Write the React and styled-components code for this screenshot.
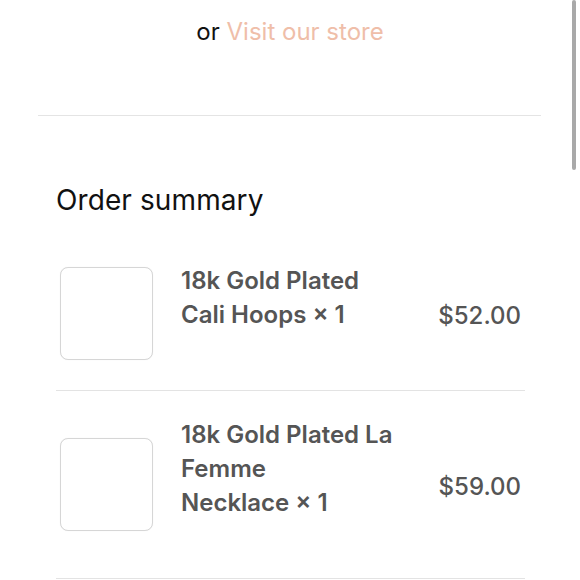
import React from "react";
import styled, { createGlobalStyle } from "styled-components";

const GlobalStyle = createGlobalStyle`
  body {
    margin: 0;
    background: #ffffff;
    font-family: Inter, "Noto Sans", "Liberation Sans", sans-serif;
  }
`;

const Page = styled.div`
  width: 580px;
  height: 580px;
  overflow: hidden;
  position: relative;
  background: #ffffff;
`;

// 상단 - 스토어 링크
const StoreLine = styled.div`
  padding-top: 17px;
  text-align: center;
  font-size: 24px;
  line-height: 30px;
  color: #111111;
`;

const StoreLink = styled.a`
  color: #efbea9;
  text-decoration: none;
`;

const Divider = styled.hr`
  border: none;
  border-top: 1px solid #e4e4e4;
  margin: 68px 39px 0 38px;
`;

// 주문 요약
const Summary = styled.section`
  padding: 0 55px 0 56px;
`;

const Heading = styled.h2`
  margin: 67px 0 20px;
  font-size: 28px;
  line-height: 34px;
  font-weight: 400;
  color: #111111;
  letter-spacing: 0.1px;
`;

const ItemRow = styled.div`
  display: flex;
  align-items: center;
  padding: 27px 4px 28px 4px;
  border-bottom: 1px solid #e3e3e3;
`;

const Thumb = styled.div`
  width: 91px;
  height: 91px;
  flex-shrink: 0;
  border: 1px solid #d6d6d6;
  border-radius: 8px;
  background: #ffffff;
  box-shadow: 0 0 1px rgba(0, 0, 0, 0.08);
`;

const ItemName = styled.div`
  flex: 1;
  margin-left: 28px;
  padding-bottom: 30px;
  font-size: 24px;
  line-height: 34px;
  font-weight: 600;
  color: #555555;
`;

const NameLine = styled.div`
  white-space: nowrap;
`;

const Price = styled.div`
  margin-left: auto;
  margin-top: 5px;
  font-size: 24px;
  line-height: 34px;
  font-weight: 500;
  color: #555555;
`;

const ScrollThumb = styled.div`
  position: absolute;
  top: 0;
  right: 4px;
  width: 4px;
  height: 170px;
  border-radius: 2px;
  background: #a9a9a9;
`;

const items = [
  { lines: ["18k Gold Plated", "Cali Hoops × 1"], price: "$52.00" },
  { lines: ["18k Gold Plated La", "Femme", "Necklace × 1"], price: "$59.00" },
];

const App = () => {
  return (
    <Page>
      <GlobalStyle />
      <StoreLine>
        or <StoreLink href="#">Visit our store</StoreLink>
      </StoreLine>
      <Divider />

      <Summary>
        <Heading>Order summary</Heading>
        {items.map((item) => (
          <ItemRow key={item.price}>
            <Thumb />
            <ItemName>
              {item.lines.map((line) => (
                <NameLine key={line}>{line}</NameLine>
              ))}
            </ItemName>
            <Price>{item.price}</Price>
          </ItemRow>
        ))}
      </Summary>

      <ScrollThumb />
    </Page>
  );
};

export default App;
